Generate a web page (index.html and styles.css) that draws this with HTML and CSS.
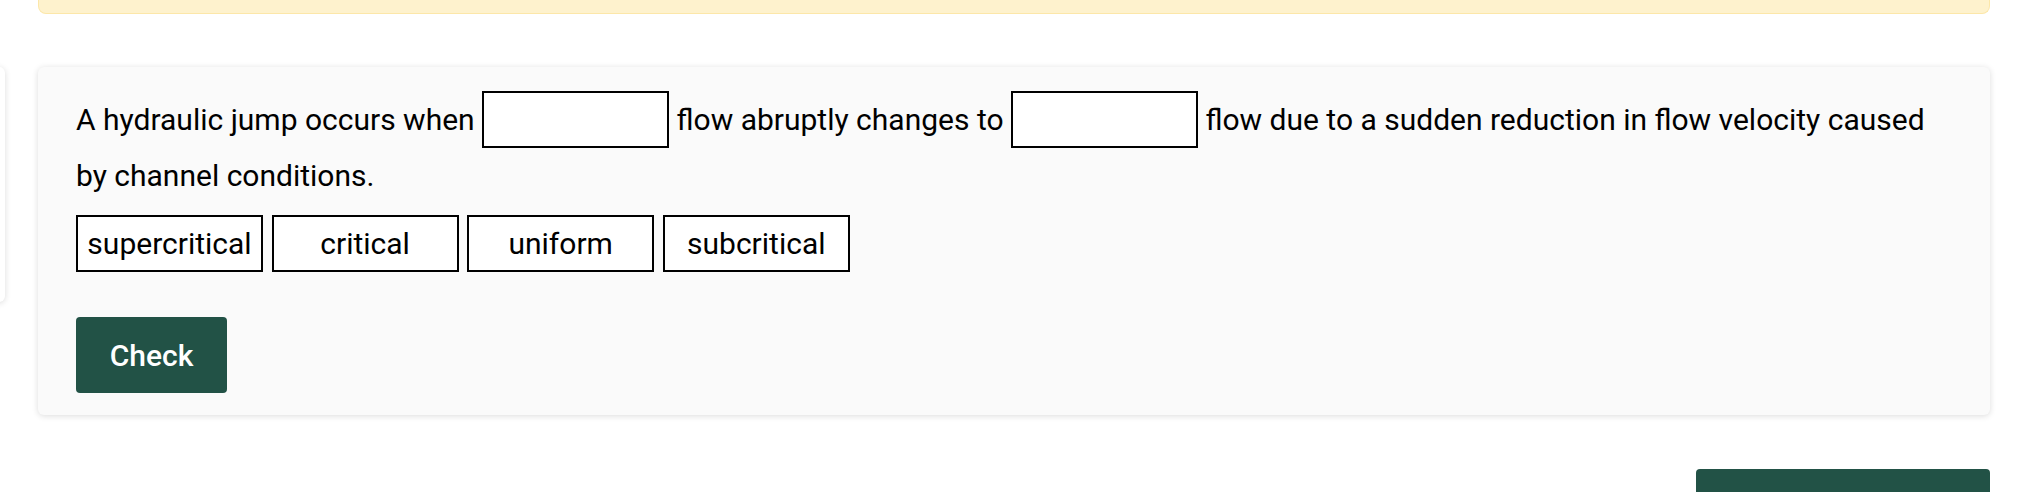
FILE: index.html
```html
<!DOCTYPE html>
<html>
<head>
    <meta charset="utf-8">
    <title>Hydraulic Jump Quiz</title>
    <link rel="stylesheet" href="styles.css">
</head>
<body>
    <div class="page">
        <div class="notice"></div>

        <div class="slider">
            <div class="slide slide-prev"></div>
            <div class="slide quiz">
                <p class="question">A hydraulic jump occurs when <input class="blank" type="text" aria-label="blank 1"> flow abruptly changes to <input class="blank" type="text" aria-label="blank 2"> flow due to a sudden reduction in flow velocity caused by channel conditions.</p>
                <div class="options">
                    <span class="option">supercritical</span>
                    <span class="option">critical</span>
                    <span class="option">uniform</span>
                    <span class="option">subcritical</span>
                </div>
                <button class="check">Check</button>
            </div>
        </div>

        <div class="nav">
            <button class="next" aria-label="Next"></button>
        </div>
    </div>
</body>
</html>
```

FILE: styles.css
```css
html, body{
    margin: 0;
    overflow: hidden;
    background-color: #ffffff;
}

body{
    font-family: Roboto, "Liberation Sans", sans-serif;
    color: #000000;
}

.page{
    padding: 0 40px 0 38px;
}

.notice{
    height: 13px;
    background-color: #fef2cd;
    border: 1px solid #fce7a9;
    border-top: none;
    border-radius: 0 0 8px 8px;
}

.slider{
    position: relative;
    margin-top: 53px;
}

.slide{
    border-radius: 6px;
    box-shadow: 0 1px 6px rgba(0, 0, 0, 0.14);
}

.slide-prev{
    position: absolute;
    top: 0;
    right: calc(100% + 33px);
    width: 1952px;
    height: 235px;
    background-color: #ffffff;
}

.quiz{
    background-color: #fafafa;
    padding: 19px 39px 22px 38px;
}

.question{
    margin: 0;
    font-size: 30px;
    line-height: 45px;
}

.blank{
    box-sizing: border-box;
    width: 187px;
    height: 57px;
    margin: 5px 0;
    padding: 0 8px;
    border: 2px solid #000000;
    border-radius: 0;
    background-color: #ffffff;
    font: inherit;
    outline: none;
}

.options{
    display: flex;
    gap: 8.6px;
    margin-top: 17px;
}

.option{
    box-sizing: border-box;
    width: 187px;
    height: 57px;
    display: flex;
    align-items: center;
    justify-content: center;
    border: 2px solid #000000;
    background-color: #ffffff;
    font-size: 30px;
}

.check{
    display: block;
    margin-top: 45px;
    width: 151px;
    height: 76px;
    padding: 0;
    border: none;
    border-radius: 4px;
    background-color: #225246;
    color: #ffffff;
    font-family: Roboto, "Liberation Sans", sans-serif;
    font-size: 30px;
    font-weight: 500;
}

.nav{
    display: flex;
    justify-content: flex-end;
    margin-top: 54px;
}

.next{
    width: 294px;
    height: 76px;
    border: none;
    border-radius: 4px;
    background-color: #225246;
}
```
